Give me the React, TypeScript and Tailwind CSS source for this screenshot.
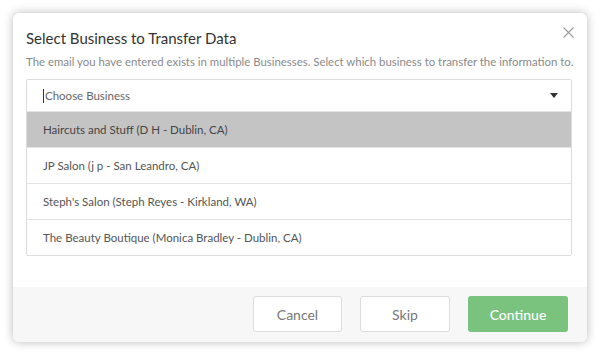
import React from "react";

const items = [
  "Haircuts and Stuff (D H - Dublin, CA)",
  "JP Salon (j p - San Leandro, CA)",
  "Steph's Salon (Steph Reyes - Kirkland, WA)",
  "The Beauty Boutique (Monica Bradley - Dublin, CA)",
];

export default function App() {
  return (
    <div className="w-[600px] h-[355px] bg-white p-[13px]" style={{ fontFamily: "Lato, 'Open Sans', sans-serif" }}>
      <div className="relative w-[574px] h-[329px] bg-white rounded-[6px] shadow-[0_0_10px_rgba(0,0,0,0.28)] flex flex-col overflow-hidden">
        <button className="absolute left-[550px] top-[14px] w-[11px] h-[11px]">
          <svg width="11" height="11" viewBox="0 0 11 11">
            <path d="M0.5 0.5 L10.5 10.5 M10.5 0.5 L0.5 10.5" stroke="#9a9a9a" strokeWidth="1.1" />
          </svg>
        </button>
        <div className="px-[13px] pt-[15px] flex-1">
          <h1 className="text-[15px] leading-[20px] text-[#333] font-normal">Select Business to Transfer Data</h1>
          <p className="mt-[6px] text-[11.4px] leading-[16px] text-[#8a8a8a] whitespace-nowrap">
            The email you have entered exists in multiple Businesses. Select which business to transfer the information to.
          </p>
          <div className="mt-[9px] w-[546px] border border-[#dcdcdc] rounded-[2px]">
            <div className="h-[31px] flex items-center pl-[16px] pr-[12px] text-[11.5px] text-[#666]">
              <span className="w-px h-[14px] bg-[#333] mr-px" />
              <span className="flex-1">Choose Business</span>
              <svg width="8" height="5" viewBox="0 0 8 5" className="mr-[1px]">
                <path d="M0 0 H8 L4 5 Z" fill="#333" />
              </svg>
            </div>
            {items.map((t, i) => (
              <div
                key={t}
                className={`h-[36px] flex items-center pl-[16px] text-[11.5px] border-t border-[#e4e4e4] ${i === 0 ? "bg-[#c4c4c4] text-[#444]" : "bg-white text-[#555]"}`}
              >
                {t}
              </div>
            ))}
          </div>
        </div>
        <div className="h-[55px] bg-[#f7f7f7] flex items-start justify-end gap-[18px] pt-[9px] pr-[19px]">
          <button className="w-[89px] h-[36px] bg-white border border-[#dcdcdc] rounded-[3px] text-[14px] text-[#777]">Cancel</button>
          <button className="w-[90px] h-[36px] bg-white border border-[#dcdcdc] rounded-[3px] text-[14px] text-[#777]">Skip</button>
          <button className="w-[100px] h-[36px] bg-[#79c37e] rounded-[3px] text-[14px] text-white font-medium">Continue</button>
        </div>
      </div>
    </div>
  );
}
